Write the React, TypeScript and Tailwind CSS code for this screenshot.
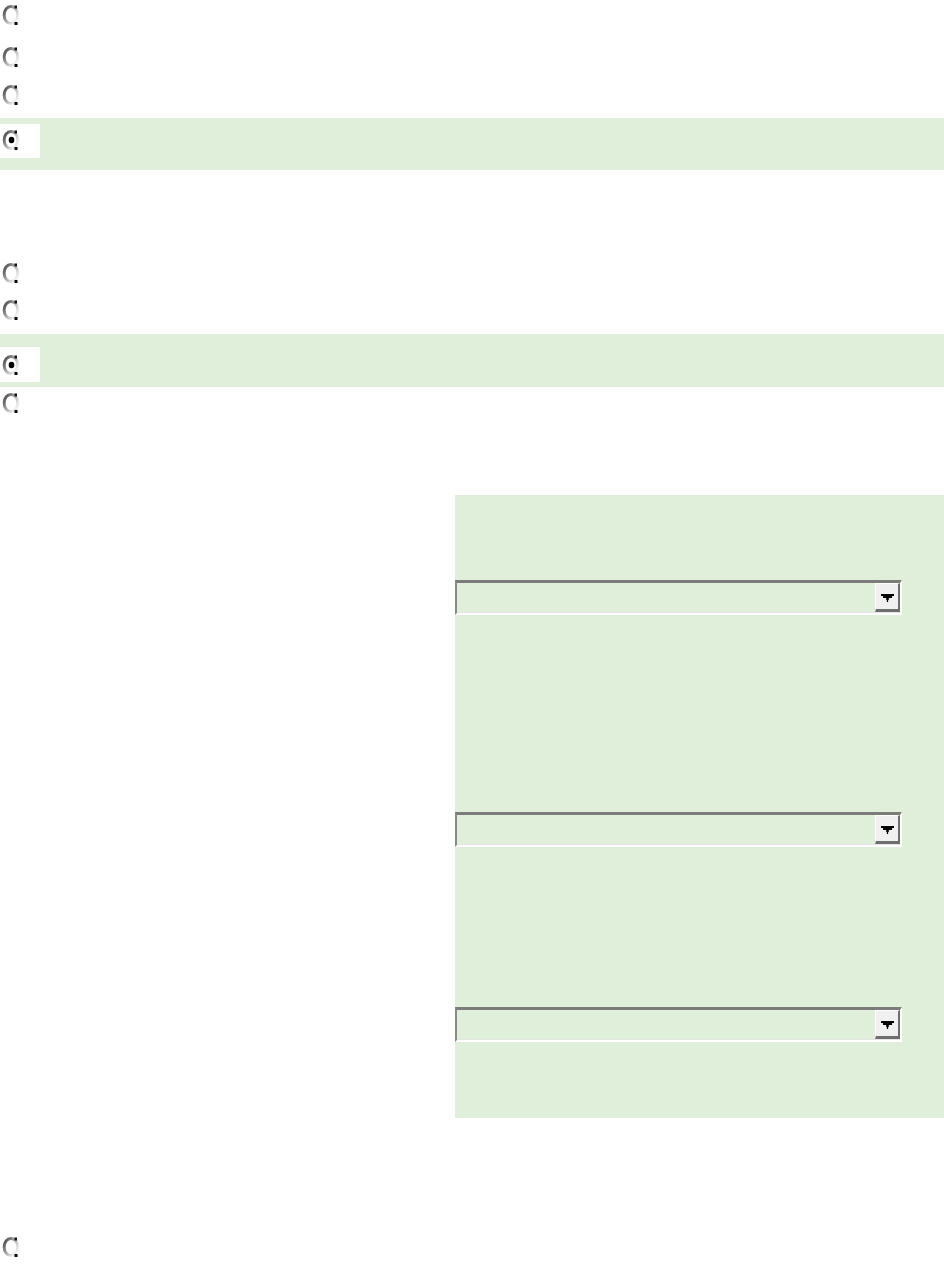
const GREEN = 'bg-[#dfefda]'

function Radio({ checked = false }: { checked?: boolean }) {
  return (
    <svg width="18" height="22" viewBox="0 0 18 22" className="block">
      <defs>
        <linearGradient id="rg" x1="0" y1="0.1" x2="1" y2="0.9">
          <stop offset="0" stopColor="#474747" />
          <stop offset="0.45" stopColor="#a8a8a8" />
          <stop offset="0.8" stopColor="#e6e6e6" />
          <stop offset="1" stopColor="#f6f6f6" />
        </linearGradient>
      </defs>
      <ellipse cx="9" cy="11" rx="6.8" ry="8.6" fill="#ffffff" stroke="url(#rg)" strokeWidth="3" />
      <rect x="12.5" y="1.5" width="2.5" height="3" fill="#111111" />
      <rect x="12.5" y="18" width="3" height="3" fill="#0a0a0a" />
      {checked && <ellipse cx="9.5" cy="11" rx="2.8" ry="3.2" fill="#000000" />}
    </svg>
  )
}

function Select() {
  return (
    <div className="w-[447px] h-[35px] border-t-[3px] border-l-[2px] border-b-[2px] border-r-[2px] border-t-[#7c7c7c] border-l-[#8a8a8a] border-b-white border-r-white">
      <div className="h-full flex justify-end border-b border-[#e4e4e4]">
        <div className="w-[25px] h-full bg-[#f0f0f0] border-t border-l border-t-white border-l-white border-r-[2px] border-b-[3px] border-r-[#6e6e6e] border-b-[#6e6e6e] flex items-center justify-center pt-[2px]">
          <svg width="13" height="8" viewBox="0 0 10 6">
            <path d="M0 0h10v1.5H8.5v1.5H6v1.5H5.5V6h-1V4.5H4V3H1.5V1.5H0z" fill="#000" />
          </svg>
        </div>
      </div>
    </div>
  )
}

export default function App() {
  return (
    <div className="w-[944px] bg-white font-['Liberation_Sans',sans-serif]">
      <div className="h-[42px] pt-[4px] pl-[2px]"><Radio /></div>
      <div className="h-[38px] pt-[4px] pl-[2px]"><Radio /></div>
      <div className="h-[38px] pt-[4px] pl-[2px]"><Radio /></div>
      <div className={`h-[52px] pt-[6px] ${GREEN}`}>
        <div className="w-[40px] h-[34px] bg-white pt-[5px] pl-[2px]"><Radio checked /></div>
      </div>

      <div className="h-[88px]" />

      <div className="h-[38px] pt-[4px] pl-[2px]"><Radio /></div>
      <div className="h-[38px] pt-[3px] pl-[2px]"><Radio /></div>
      <div className={`h-[53px] pt-[13px] ${GREEN}`}>
        <div className="w-[40px] h-[35px] bg-white pt-[7px] pl-[2px]"><Radio checked /></div>
      </div>
      <div className="h-[108px] pt-[5px] pl-[2px]"><Radio /></div>

      {/* settings panel */}
      <div className={`ml-[455px] h-[623px] pt-[85px] ${GREEN}`}>
        <Select />
        <div className="h-[197px]" />
        <Select />
        <div className="h-[160px]" />
        <Select />
      </div>

      <div className="pt-[118px] pl-[2px] h-[148px]"><Radio /></div>
    </div>
  )
}
